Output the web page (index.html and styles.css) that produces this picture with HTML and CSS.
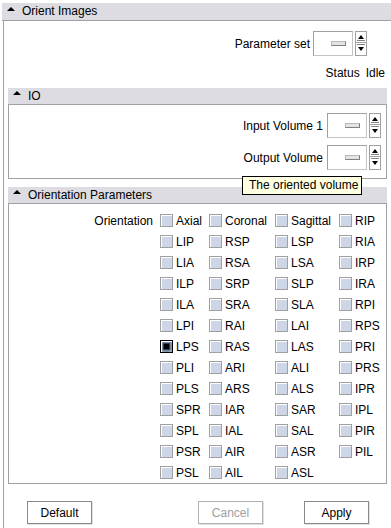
FILE: index.html
```html
<!DOCTYPE html>
<html>
<head>
<meta charset="utf-8">
<link rel="stylesheet" href="styles.css">
</head>
<body>
<div class="outer">
  <div class="hdr top-hdr"><span class="tri"></span>Orient Images</div>
  <div class="outer-body">
    <div class="row param">
      <span class="lbl">Parameter set</span>
      <div class="spin"><div class="field"><span class="bar"></span></div><div class="arrows"><span class="ab up"></span><span class="ab down"></span></div></div>
    </div>
    <div class="row status"><span>Status</span><span>Idle</span></div>

    <section class="sec">
      <div class="hdr sub-hdr"><span class="tri"></span>IO</div>
      <div class="sec-body io-body">
        <div class="row io-row">
          <span class="lbl">Input Volume 1</span>
          <div class="spin"><div class="field"><span class="bar"></span></div><div class="arrows"><span class="ab up"></span><span class="ab down"></span></div></div>
        </div>
        <div class="row io-row second">
          <span class="lbl">Output Volume</span>
          <div class="spin"><div class="field"><span class="bar"></span></div><div class="arrows"><span class="ab up"></span><span class="ab down"></span></div></div>
        </div>
      </div>
    </section>

    <section class="sec orient-sec">
      <div class="hdr sub-hdr"><span class="tri"></span>Orientation Parameters</div>
      <div class="sec-body orient-body">
        <div class="grid">
          <span class="olbl">Orientation</span>
          <label class="cb"><span class="box"></span>Axial</label>
          <label class="cb"><span class="box"></span>Coronal</label>
          <label class="cb"><span class="box"></span>Sagittal</label>
          <label class="cb"><span class="box"></span>RIP</label>

          <span></span>
          <label class="cb"><span class="box"></span>LIP</label>
          <label class="cb"><span class="box"></span>RSP</label>
          <label class="cb"><span class="box"></span>LSP</label>
          <label class="cb"><span class="box"></span>RIA</label>

          <span></span>
          <label class="cb"><span class="box"></span>LIA</label>
          <label class="cb"><span class="box"></span>RSA</label>
          <label class="cb"><span class="box"></span>LSA</label>
          <label class="cb"><span class="box"></span>IRP</label>

          <span></span>
          <label class="cb"><span class="box"></span>ILP</label>
          <label class="cb"><span class="box"></span>SRP</label>
          <label class="cb"><span class="box"></span>SLP</label>
          <label class="cb"><span class="box"></span>IRA</label>

          <span></span>
          <label class="cb"><span class="box"></span>ILA</label>
          <label class="cb"><span class="box"></span>SRA</label>
          <label class="cb"><span class="box"></span>SLA</label>
          <label class="cb"><span class="box"></span>RPI</label>

          <span></span>
          <label class="cb"><span class="box"></span>LPI</label>
          <label class="cb"><span class="box"></span>RAI</label>
          <label class="cb"><span class="box"></span>LAI</label>
          <label class="cb"><span class="box"></span>RPS</label>

          <span></span>
          <label class="cb"><span class="box checked"><span class="dot"></span></span>LPS</label>
          <label class="cb"><span class="box"></span>RAS</label>
          <label class="cb"><span class="box"></span>LAS</label>
          <label class="cb"><span class="box"></span>PRI</label>

          <span></span>
          <label class="cb"><span class="box"></span>PLI</label>
          <label class="cb"><span class="box"></span>ARI</label>
          <label class="cb"><span class="box"></span>ALI</label>
          <label class="cb"><span class="box"></span>PRS</label>

          <span></span>
          <label class="cb"><span class="box"></span>PLS</label>
          <label class="cb"><span class="box"></span>ARS</label>
          <label class="cb"><span class="box"></span>ALS</label>
          <label class="cb"><span class="box"></span>IPR</label>

          <span></span>
          <label class="cb"><span class="box"></span>SPR</label>
          <label class="cb"><span class="box"></span>IAR</label>
          <label class="cb"><span class="box"></span>SAR</label>
          <label class="cb"><span class="box"></span>IPL</label>

          <span></span>
          <label class="cb"><span class="box"></span>SPL</label>
          <label class="cb"><span class="box"></span>IAL</label>
          <label class="cb"><span class="box"></span>SAL</label>
          <label class="cb"><span class="box"></span>PIR</label>

          <span></span>
          <label class="cb"><span class="box"></span>PSR</label>
          <label class="cb"><span class="box"></span>AIR</label>
          <label class="cb"><span class="box"></span>ASR</label>
          <label class="cb"><span class="box"></span>PIL</label>

          <span></span>
          <label class="cb"><span class="box"></span>PSL</label>
          <label class="cb"><span class="box"></span>AIL</label>
          <label class="cb"><span class="box"></span>ASL</label>
          <span></span>
        </div>
      </div>
    </section>

    <div class="buttons">
      <button class="btn b-default">Default</button>
      <button class="btn b-cancel" disabled>Cancel</button>
      <button class="btn b-apply">Apply</button>
    </div>
  </div>
  <div class="tooltip">The oriented volume</div>
</div>
</body>
</html>
```

FILE: styles.css
```css
* { box-sizing: border-box; }
html, body { margin: 0; padding: 0; background: #fff; }
body {
  font-family: "Liberation Sans", Arial, sans-serif;
  font-size: 12px;
  color: #000;
  width: 391px;
  height: 528px;
  overflow: hidden;
}
.outer {
  position: relative;
  margin-left: 2px;
  padding-top: 3px;
}
.hdr {
  background: #dcdce2;
  height: 18px;
  border-bottom: 1px solid #a0a0a4;
  line-height: 17px;
  display: flex;
  align-items: center;
  white-space: nowrap;
}
.top-hdr { padding-left: 5px; }
.tri {
  width: 0; height: 0;
  border-left: 4px solid transparent;
  border-right: 4px solid transparent;
  border-bottom: 4px solid #000;
  margin-right: 7px;
  margin-top: -6px;
}
.outer-body {
  margin-left: 1px;
  border-left: 1px solid #a0a0a4;
  height: 510px;
  padding-top: 10px;
}
.row {
  display: flex;
  justify-content: flex-end;
  align-items: center;
}
.param { padding-right: 24px; height: 25px; }
.param .lbl { margin-right: 3px; }
.status { margin-top: 10px; height: 14px; padding-right: 6px; gap: 6px; }

.spin { display: flex; align-items: stretch; height: 25px; }
.field {
  width: 40px;
  height: 25px;
  border: 1px solid #a0a0a0;
  border-right-color: #c4c4c4;
  border-bottom-color: #c4c4c4;
  background: #fff;
  display: flex;
  align-items: center;
  justify-content: flex-end;
  padding-right: 6px;
}
.bar {
  width: 15px;
  height: 5px;
  background: #e4e4e4;
  border: 1px solid #b8b8b8;
  border-bottom-color: #808080;
  border-right-color: #808080;
}
.arrows {
  margin-left: 2px;
  width: 12px;
  display: flex;
  flex-direction: column;
}
.ab {
  position: relative;
  height: 12px;
  border: 1px solid #a0a0a0;
  background: #fff;
  box-shadow: inset 1px 1px 0 #fff;
}
.ab.down { height: 13px; border-top: none; }
.ab::after {
  content: "";
  position: absolute;
  left: 2px;
  width: 0; height: 0;
  border-left: 3px solid transparent;
  border-right: 3px solid transparent;
}
.ab.up::after { top: 3px; border-bottom: 4px solid #000; }
.ab.down::after { top: 4px; border-top: 4px solid #000; }
.ab.up::before, .ab.down::before {
  content: "";
  position: absolute;
  left: 1px; right: 1px;
  height: 1px;
  background: #808080;
}
.ab.up::before { bottom: 1px; }
.ab.down::before { top: 1px; }

.sec { margin: 8px 4px 0 4px; }
.sub-hdr { height: 17px; padding-left: 5px; line-height: 16px; }
.sec-body {
  border: 1px solid #a0a0a4;
  border-top: none;
}
.io-body { padding: 8px 5px 8px 0; height: 74px; }
.io-row .lbl { margin-right: 4px; }
.io-row.second { margin-top: 7px; }

.orient-body { padding-top: 6px; height: 280px; }
.grid {
  display: grid;
  grid-template-columns: 151px 49px 66px 64px auto;
  grid-auto-rows: 21px;
}
.olbl {
  text-align: right;
  padding-right: 7px;
  display: flex;
  align-items: center;
  justify-content: flex-end;
}
.cb {
  display: flex;
  align-items: center;
  white-space: nowrap;
}
.box {
  width: 13px;
  height: 13px;
  margin-right: 3px;
  border: 1px solid #a0a0a0;
  background: #ccd6e6;
  box-shadow: inset 1px 1px 0 #fff;
  display: flex;
  align-items: center;
  justify-content: center;
  flex: none;
}
.box.checked {
  border-color: #000;
  background: radial-gradient(circle, #4a5a70 0%, #8594aa 70%, #a9b6c8 100%);
  box-shadow: inset 1px 1px 0 #fff;
}
.dot {
  width: 5px;
  height: 5px;
  background: #000;
  box-shadow: 0 0 0 1px #32405a;
}

.buttons {
  display: flex;
  margin-top: 17px;
}
.btn {
  font-family: "Liberation Sans", Arial, sans-serif;
  font-size: 12px;
  height: 23px;
  width: 65px;
  padding: 0;
  background: #fff;
  color: #000;
  border: 1px solid #8a8a8a;
  box-shadow: inset 1px 1px 0 #fff, 1px 1px 0 #e0e0e0;
  border-radius: 0;
}
.b-default { margin-left: 23px; }
.b-cancel { margin-left: 106px; color: #a0a0a0; border-color: #b0b0b0; }
.b-apply { margin-left: 41px; }

.tooltip {
  position: absolute;
  left: 240px;
  top: 176px;
  width: 120px;
  height: 19px;
  background: #ffffe1;
  border: 1px solid #000;
  padding-left: 6px;
  line-height: 17px;
  white-space: nowrap;
}
```
